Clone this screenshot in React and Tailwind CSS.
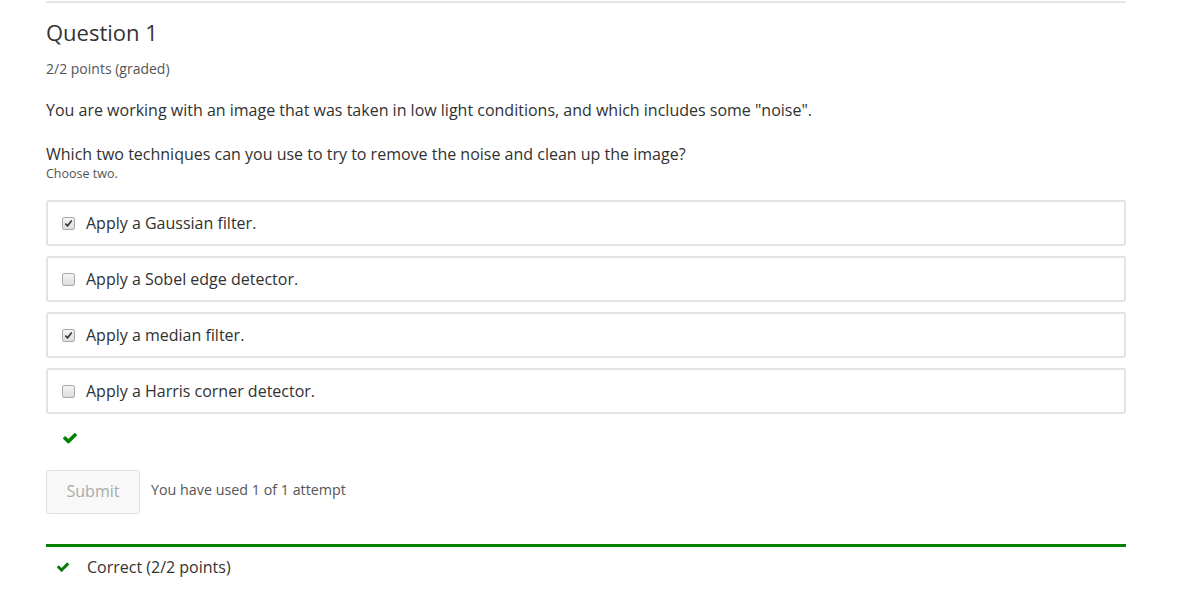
import { useState } from 'react';

const options = [
  { id: 'gaussian', label: 'Apply a Gaussian filter.', checked: true },
  { id: 'sobel', label: 'Apply a Sobel edge detector.', checked: false },
  { id: 'median', label: 'Apply a median filter.', checked: true },
  { id: 'harris', label: 'Apply a Harris corner detector.', checked: false },
];

// FontAwesome-style check mark
function Check({ className }) {
  return (
    <svg viewBox="0 0 1792 1792" className={className} fill="currentColor">
      <path d="M1671 566q0 40-28 68l-724 724-136 136q-28 28-68 28t-68-28l-136-136-362-362q-28-28-28-68t28-68l136-136q28-28 68-28t68 28l294 295 656-657q28-28 68-28t68 28l136 136q28 28 28 68z" />
    </svg>
  );
}

function Box({ checked }) {
  return (
    <span className="w-[13px] h-[13px] rounded-[2px] border border-[#a9a9a9] bg-gradient-to-b from-[#f4f4f4] to-[#dedede] flex items-center justify-center shrink-0">
      {checked && (
        <svg viewBox="0 0 10 10" className="w-[9px] h-[9px]">
          <path d="M1.5 5.2 L4 7.6 L8.6 1.8" stroke="#333" strokeWidth="1.8" fill="none" />
        </svg>
      )}
    </span>
  );
}

export default function App() {
  const [selected] = useState(options);

  return (
    <div className="w-[1195px] h-[596px] bg-white overflow-hidden font-['Open_Sans',sans-serif] text-[#313131]">
      <div className="ml-[46px] w-[1080px]">
        <div className="border-t-2 border-[#e5e5e5] mt-px" />

        <h2 className="text-[22px] leading-[28px] mt-[15px] text-[#333]">Question 1</h2>
        <div className="text-[14px] text-[#555] mt-[14px] leading-[18px]">2/2 points (graded)</div>

        <p className="text-[16px] leading-[22px] mt-[21px]">
          You are working with an image that was taken in low light conditions, and which includes some "noise".
        </p>
        <p className="text-[16px] leading-[22px] mt-[22px]">
          Which two techniques can you use to try to remove the noise and clean up the image?
        </p>
        <div className="text-[12.5px] leading-[14px] text-[#555] mt-[2px]">Choose two.</div>

        <div className="flex flex-col gap-[10px] mt-[19px]">
          {selected.map((o) => (
            <div
              key={o.id}
              className="h-[46px] border-2 border-[#e3e3e3] rounded-[3px] flex items-center pl-[14px] gap-[11px]"
            >
              <Box checked={o.checked} />
              <span className="text-[16px]">{o.label}</span>
            </div>
          ))}
        </div>

        <div className="pl-[16px] mt-[17px] h-[14px] flex items-center">
          <Check className="w-[16px] h-[16px] text-[#008100]" />
        </div>

        <div className="flex items-center mt-[25px] gap-[11px]">
          <button className="w-[94px] h-[44px] border border-[#e0e0e0] rounded-[3px] bg-[#f8f8f8] text-[#aaa] text-[16px] pb-[2px]">
            Submit
          </button>
          <span className="text-[14.3px] text-[#555] -mt-[4px]">You have used 1 of 1 attempt</span>
        </div>

        <div className="border-t-[3px] border-[#008100] mt-[30px]" />
        <div className="flex items-center h-[40px] pl-[10px]">
          <Check className="w-[14px] h-[14px] text-[#0a7a0a]" />
          <span className="text-[16px] ml-[17px] text-[#333]">Correct (2/2 points)</span>
        </div>
      </div>
    </div>
  );
}
